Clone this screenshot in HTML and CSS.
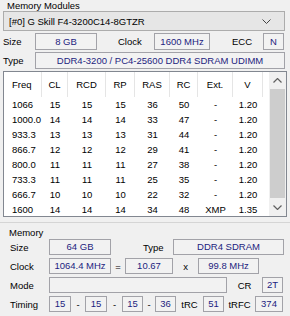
FILE: index.html
```html
<!DOCTYPE html>
<html lang="en">
	<head>
		<meta charset="utf-8">
		<title>Memory SPD</title>
		<link rel="stylesheet" href="styles.css">
	</head>
	<body>

		<div class="modules">

			<div class="legend top">Memory Modules</div>

			<div class="select">
				<span>[#0] G Skill F4-3200C14-8GTZR</span>
				<svg class="chev" width="9" height="5" viewBox="0 0 9 5"><path d="M0.5 0.5 L4.5 4.5 L8.5 0.5" fill="none" stroke="#444" stroke-width="1"/></svg>
			</div>

			<div class="row">
				<span class="lbl spd-lbl">Size</span>
				<span class="val spd-size">8 GB</span>
				<span class="lbl spd-clock-lbl">Clock</span>
				<span class="val spd-clock">1600 MHz</span>
				<span class="lbl spd-ecc-lbl">ECC</span>
				<span class="val spd-ecc">N</span>
			</div>

			<div class="row">
				<span class="lbl spd-lbl">Type</span>
				<span class="val spd-type">DDR4-3200 / PC4-25600 DDR4 SDRAM UDIMM</span>
			</div>

			<div class="spd">
				<div class="grid">
					<div class="head left">Freq</div>
					<div class="head">CL</div>
					<div class="head">RCD</div>
					<div class="head">RP</div>
					<div class="head">RAS</div>
					<div class="head">RC</div>
					<div class="head">Ext.</div>
					<div class="head">V</div>

					<div class="left">1066</div><div>15</div><div>15</div><div>15</div><div>36</div><div>50</div><div>-</div><div>1.20</div>
					<div class="left">1000.0</div><div>14</div><div>14</div><div>14</div><div>33</div><div>47</div><div>-</div><div>1.20</div>
					<div class="left">933.3</div><div>13</div><div>13</div><div>13</div><div>31</div><div>44</div><div>-</div><div>1.20</div>
					<div class="left">866.7</div><div>12</div><div>12</div><div>12</div><div>29</div><div>41</div><div>-</div><div>1.20</div>
					<div class="left">800.0</div><div>11</div><div>11</div><div>11</div><div>27</div><div>38</div><div>-</div><div>1.20</div>
					<div class="left">733.3</div><div>11</div><div>11</div><div>11</div><div>25</div><div>35</div><div>-</div><div>1.20</div>
					<div class="left">666.7</div><div>10</div><div>10</div><div>10</div><div>22</div><div>32</div><div>-</div><div>1.20</div>
					<div class="left">1600</div><div>14</div><div>14</div><div>14</div><div>34</div><div>48</div><div>XMP</div><div>1.35</div>
				</div>

				<div class="scrollbar">
					<div class="arrow">
						<svg width="9" height="5" viewBox="0 0 9 5"><path d="M0.5 4.5 L4.5 0.5 L8.5 4.5" fill="none" stroke="#606060" stroke-width="1.2"/></svg>
					</div>
					<div class="thumb"></div>
					<div class="arrow">
						<svg width="9" height="5" viewBox="0 0 9 5"><path d="M0.5 0.5 L4.5 4.5 L8.5 0.5" fill="none" stroke="#606060" stroke-width="1.2"/></svg>
					</div>
				</div>
			</div>

		</div>

		<div class="memory">

			<div class="legend">Memory</div>

			<div class="mrow">
				<span class="lbl mem-lbl">Size</span>
				<span class="val mem-size">64 GB</span>
				<span class="lbl mem-type-lbl">Type</span>
				<span class="val mem-type">DDR4 SDRAM</span>
			</div>

			<div class="mrow">
				<span class="lbl mem-lbl">Clock</span>
				<span class="val mem-clock">1064.4 MHz</span>
				<span class="sep eq">=</span>
				<span class="val mem-mult">10.67</span>
				<span class="sep times">x</span>
				<span class="val mem-bus">99.8 MHz</span>
			</div>

			<div class="mrow">
				<span class="lbl mem-lbl">Mode</span>
				<span class="val mem-mode"></span>
				<span class="sep cr">CR</span>
				<span class="val mem-cr">2T</span>
			</div>

			<div class="mrow">
				<span class="lbl mem-lbl">Timing</span>
				<span class="val t t1">15</span>
				<span class="sep dash1">-</span>
				<span class="val t t1">15</span>
				<span class="sep dash2">-</span>
				<span class="val t">15</span>
				<span class="sep dash3">-</span>
				<span class="val t">36</span>
				<span class="sep trc">tRC</span>
				<span class="val t">51</span>
				<span class="sep trfc">tRFC</span>
				<span class="val t-rfc">374</span>
			</div>

		</div>

	</body>
</html>
```

FILE: styles.css
```css
html, body {

	margin: 0;
	width: 290px;
	height: 316px;
	overflow: hidden;

	background: #f0f0f0;
	color: #000000;

	font-family: "Liberation Sans", Arial, sans-serif;
	font-size: 9.5px;

}

/* Memory Modules group */

.modules {
	padding: 0 3px 5px 3px;
	border-bottom: 1px solid #d5d5d5;
}

.legend {
	height: 11px;
	line-height: 11px;
	padding-left: 4px;
}

.legend.top {
	height: 11px;
}

.select {
	display: flex;
	align-items: center;
	justify-content: space-between;
	height: 18px;
	padding: 0 13px 0 5px;
	margin-right: 2px;
	background: #e6e6e6;
	border: 1px solid #acacac;
}

.chev {
	display: block;
}

.row {
	display: flex;
	align-items: center;
	height: 17px;
	margin-top: 2px;
}

.row:first-of-type {
	margin-top: 1px;
}

.lbl, .sep {
	flex: none;
	display: block;
}

.sep {
	text-align: center;
}

.val {
	flex: none;
	display: block;
	box-sizing: border-box;
	height: 100%;
	border: 1px solid #a2a2a8;
	background: #f2f2f2;
	color: #1d1d80;
	text-align: center;
	line-height: 15px;
}

.spd-lbl { width: 32px; }
.spd-size { width: 62px; }
.spd-clock-lbl { margin-left: 21px; width: 36px; }
.spd-clock { width: 56px; }
.spd-ecc-lbl { margin-left: 22px; width: 31px; }
.spd-ecc { width: 21px; }
.spd-type { width: 250px; }

/* SPD timings table */

.spd {
	display: flex;
	height: 144px;
	margin-top: 2px;
	border: 1px solid #828790;
	background: #ffffff;
}

.grid {
	display: grid;
	grid-template-columns: 38px 26px 38px 29px 35px 28px 35px 30px;
	grid-template-rows: 25px repeat(8, 15px);
	align-content: start;
	width: 265px;
}

.grid > div {
	text-align: center;
	line-height: 15px;
}

.grid > .left {
	text-align: left;
	padding-left: 8px;
}

.grid > .head {
	line-height: 25px;
	border-right: 1px solid #e5e5e5;
}

.scrollbar {
	width: 17px;
	display: flex;
	flex-direction: column;
	background: #f0f0f0;
}

.arrow {
	height: 17px;
	display: flex;
	align-items: center;
	justify-content: center;
}

.thumb {
	flex: 1;
	margin: 0 1px 1px 1px;
	background: #cdcdcd;
}

/* Memory group */

.memory {
	margin: 4px 3px 0 2px;
}

.memory .legend {
	padding-left: 7px;
}

.mrow {
	display: flex;
	align-items: center;
	height: 16px;
	margin-top: 3px;
	padding-left: 8px;
}

.memory .legend + .mrow {
	margin-top: 1px;
}

.mrow .val {
	line-height: 14px;
}

.mem-lbl { width: 39px; }
.mem-size { width: 62px; }
.mem-type-lbl { margin-left: 32px; width: 30px; }
.mem-type { width: 111px; }
.mem-clock { width: 62px; }
.eq { width: 14px; }
.mem-mult { width: 48px; }
.times { width: 25px; }
.mem-bus { width: 61px; }
.mem-mode { width: 178px; }
.cr { width: 35px; }
.mem-cr { width: 21px; }

.t { width: 21px; }
.t1 { width: 22px; }
.dash1 { width: 14px; }
.dash2 { width: 15px; }
.dash3 { width: 12px; }
.trc { width: 27px; }
.trfc { width: 31px; }
.t-rfc { width: 28px; }
```
